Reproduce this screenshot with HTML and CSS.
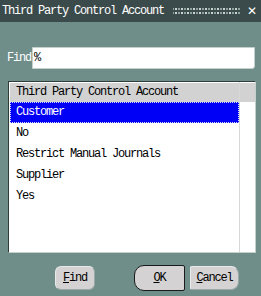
FILE: index.html
```html
<!DOCTYPE html>
<html lang="en">
<head>
    <meta charset="UTF-8">
    <title>Third Party Control Account</title>
    <link rel="stylesheet" href="styles.css">
</head>
<body>

<div class="window">
    <div class="titlebar">
        <span class="title">Third Party Control Account</span>
        <span class="grip"></span>
        <span class="close">&#x2715;</span>
    </div>

    <div class="find-row">
        <label class="find-label">Find</label>
        <div class="find-input">%</div>
    </div>

    <div class="listbox">
        <div class="list-main">
            <div class="list-head">Third Party Control Account</div>
            <div class="list-row selected">Customer</div>
            <div class="list-row">No</div>
            <div class="list-row">Restrict Manual Journals</div>
            <div class="list-row">Supplier</div>
            <div class="list-row">Yes</div>
        </div>
        <div class="list-side">
            <div class="side-head"></div>
        </div>
    </div>

    <div class="buttons">
        <button class="btn btn-find"><u>F</u>ind</button>
        <button class="btn btn-ok"><u>O</u>K</button>
        <button class="btn btn-cancel"><u>C</u>ancel</button>
    </div>
</div>

</body>
</html>
```

FILE: styles.css
```css
body {
    margin: 0;
    font-family: 'Liberation Mono', 'DejaVu Sans Mono', monospace;
    font-size: 12px;
    letter-spacing: -1.2px;
    color: #000;
}

.window {
    width: 261px;
    height: 296px;
    background-color: #6f8e8a;
    display: flex;
    flex-direction: column;
    overflow: hidden;
}

/* Title bar */
.titlebar {
    height: 22px;
    background-color: #3b4b4b;
    display: flex;
    align-items: center;
    padding: 0 4px 0 2px;
    color: #fff;
}

.title {
    white-space: nowrap;
}

.grip {
    flex: 1;
    height: 8px;
    margin: 0 6px 0 9px;
    background-image:
        radial-gradient(circle, #c8d4d0 0.9px, transparent 1.2px),
        radial-gradient(circle, #8fa29e 0.9px, transparent 1.2px);
    background-size: 6px 4px, 6px 4px;
    background-position: 0 0, 3px 4px;
}

.close {
    font-family: 'DejaVu Sans', sans-serif;
    font-size: 12px;
    font-weight: bold;
    letter-spacing: 0;
}

/* Find row */
.find-row {
    display: flex;
    align-items: center;
    margin-top: 25px;
    padding-left: 7px;
}

.find-label {
    color: #fff;
    width: 25px;
}

.find-input {
    width: 220px;
    height: 20px;
    line-height: 20px;
    background-color: #fff;
    border: 1px solid #c4d0cc;
    border-radius: 0 0 3px 0;
    padding-left: 1px;
}

/* List */
.listbox {
    margin: 12px 0 0 8px;
    width: 246px;
    height: 170px;
    background-color: #fff;
    border-top: 1px solid #2e3c3a;
    border-left: 1px solid #2e3c3a;
    border-right: 1px solid #c4d0cc;
    border-bottom: 1px solid #c4d0cc;
    display: flex;
}

.list-main {
    flex: 1;
    padding-top: 1px;
}

.list-head {
    height: 19px;
    line-height: 19px;
    background-color: #d2d2d2;
    padding-left: 6px;
    margin-left: 1px;
}

.list-row {
    height: 21px;
    line-height: 21px;
    padding-left: 6px;
    margin-left: 1px;
}

.list-row.selected {
    background-color: #0000f6;
    color: #fff;
    outline: 1px dotted #d8d8ff;
    outline-offset: -1px;
}

.list-side {
    width: 15px;
    border-left: 1px solid #d8d8d8;
    padding-top: 1px;
}

.side-head {
    height: 19px;
    background-color: #d2d2d2;
}

/* Buttons */
.buttons {
    display: flex;
    margin-top: 12px;
    padding-left: 55px;
}

.btn {
    font-family: inherit;
    font-size: 12px;
    letter-spacing: -1.2px;
    background-color: #d4d2d2;
    border: 1px solid #e8eaea;
    border-right-color: #9aa8a6;
    border-bottom-color: #9aa8a6;
    border-radius: 6px;
    height: 24px;
    padding: 0;
    color: #000;
}

.btn-find {
    width: 40px;
    margin-top: 1px;
}

.btn-ok {
    width: 51px;
    height: 26px;
    margin-left: 39px;
    border: 1px solid #1a1a1a;
    border-radius: 10px 2px 2px 10px;
}

.btn-cancel {
    width: 49px;
    margin-left: 5px;
    margin-top: 1px;
    border-radius: 2px 8px 8px 2px;
}
```
